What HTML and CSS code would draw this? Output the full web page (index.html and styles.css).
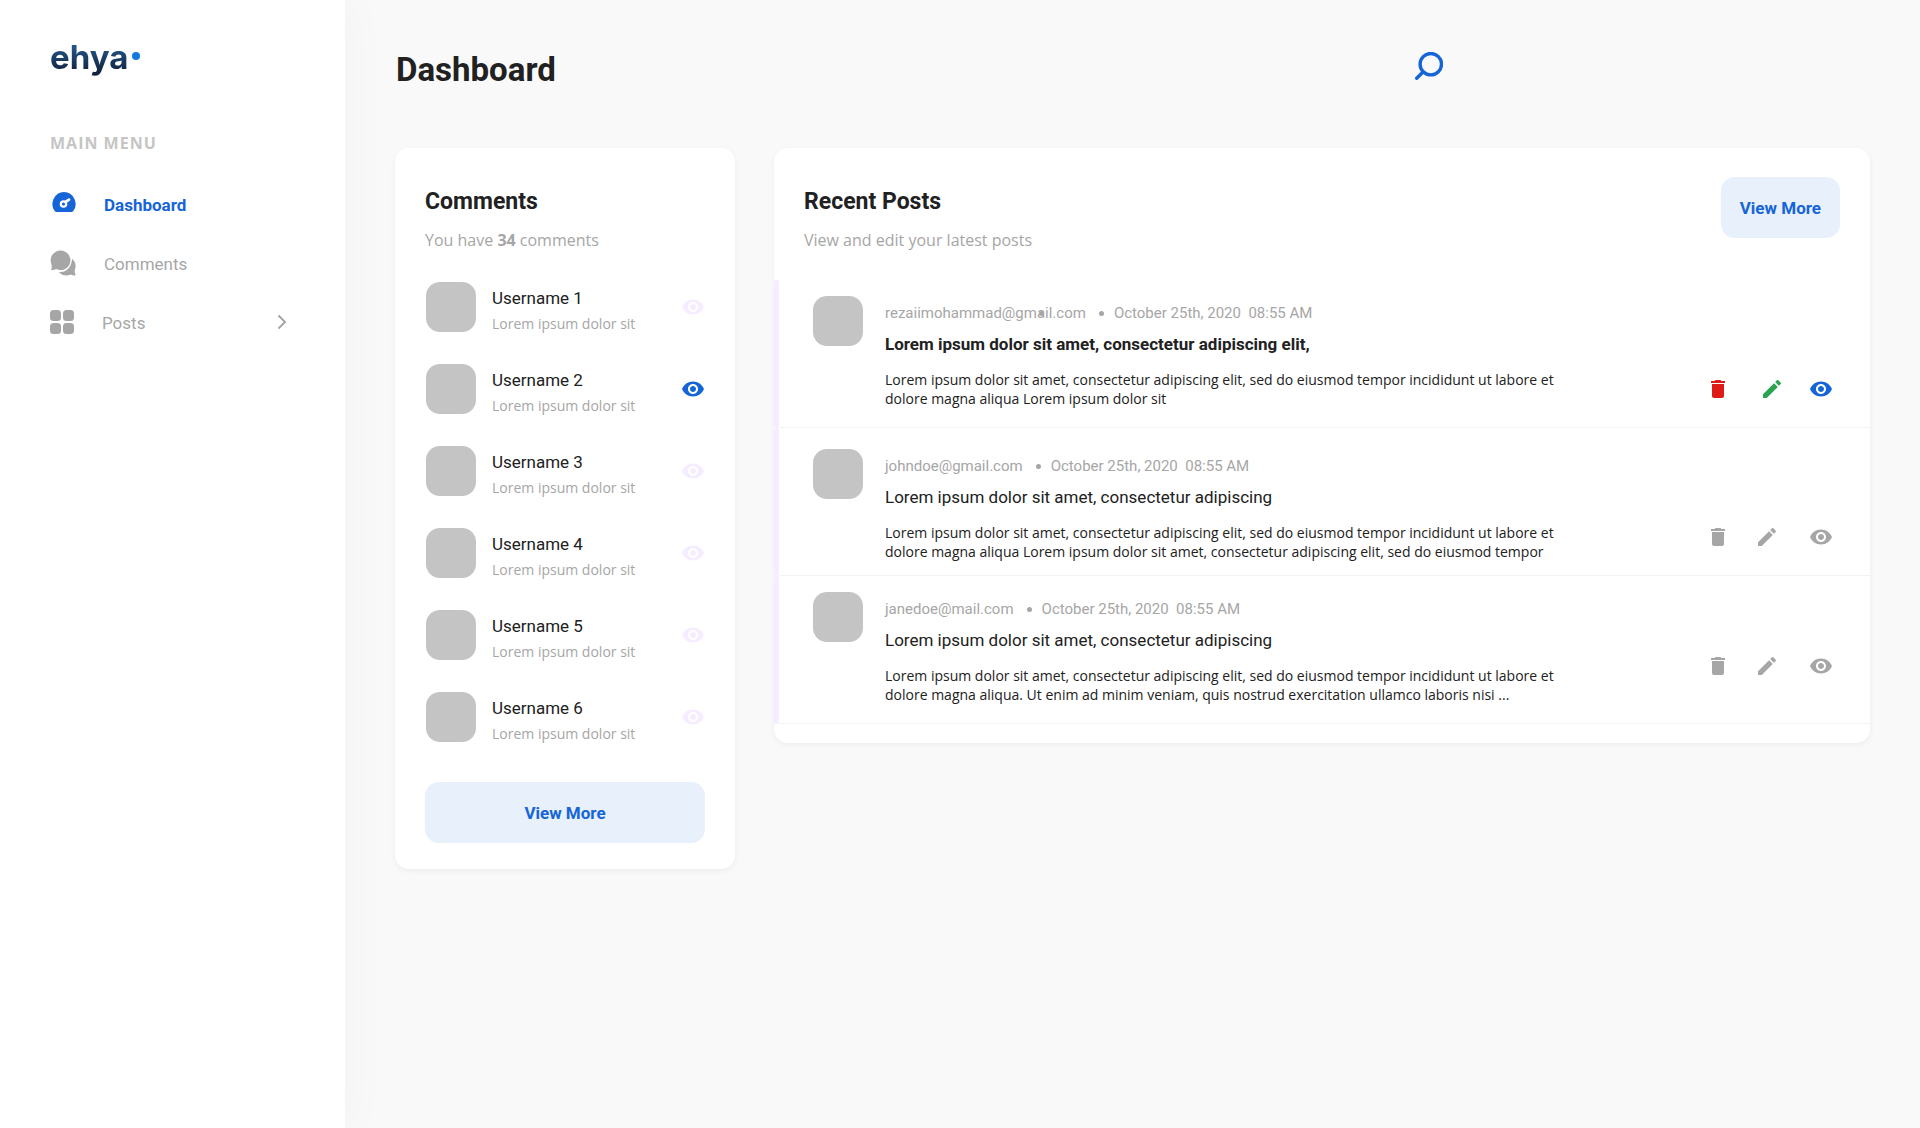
FILE: index.html
```html
<!DOCTYPE html>
<html lang="en">
<head>
<meta charset="utf-8">
<meta name="viewport" content="width=device-width, initial-scale=1">
<title>Dashboard</title>
<link rel="stylesheet" href="styles.css">
</head>
<body>
<svg class="sprite" aria-hidden="true">
  <symbol id="eye" viewBox="0 0 24 24"><path d="M12 4.5C7 4.5 2.73 7.61 1 12c1.73 4.39 6 7.5 11 7.5s9.27-3.11 11-7.5c-1.73-4.39-6-7.5-11-7.5zM12 17c-2.76 0-5-2.24-5-5s2.24-5 5-5 5 2.24 5 5-2.24 5-5 5zm0-8c-1.66 0-3 1.34-3 3s1.34 3 3 3 3-1.340 3-3-1.340-3-3-3z"/></symbol>
  <symbol id="pencil" viewBox="0 0 24 24"><path d="M3 17.25V21h3.75L17.810 9.940l-3.750-3.750L3 17.250zM20.710 7.040c.390-.390.390-1.020 0-1.410l-2.340-2.340c-.390-.390-1.020-.390-1.410 0l-1.830 1.830 3.750 3.750 1.830-1.830z"/></symbol>
  <symbol id="trash" viewBox="0 0 24 24"><path d="M6 19c0 1.100.900 2 2 2h8c1.100 0 2-.900 2-2V7H6v12zM19 4h-3.500l-1-1h-5l-1 1H5v2h14V4z"/></symbol>
</svg>
<div class="app">
  <aside class="sidebar">
    <a class="logo" href="#"><span class="logo-text">ehya</span><span class="logo-dot"></span></a>
    <p class="menu-title">MAIN MENU</p>
    <nav class="menu">
      <a class="menu-item active" href="#">
        <svg width="26" height="26" viewBox="0 0 26 26"><path fill="currentColor" d="M14 1a12 12 0 0 1 9.300 19Q22.500 21 21.500 21H6.500Q5.500 21 4.700 20A12 12 0 0 1 14 1z"/><circle cx="13.500" cy="13" r="2.700" fill="none" stroke="#fff" stroke-width="2.200"/><path d="M15.500 11L19 8.700" stroke="#fff" stroke-width="2.800" stroke-linecap="round"/></svg>
        <span>Dashboard</span>
      </a>
      <a class="menu-item" href="#">
        <svg width="26" height="26" viewBox="0 0 27 26" fill="currentColor"><path d="M11 0a10.200 10.200 0 1 1-4.600 19.300Q4 20.700 1 20.200Q2.300 17.800 1.600 14.600A10.200 10.200 0 0 1 11 0z"/><path d="M23 8.500Q28.500 13.500 25.600 20.400Q25.500 23.300 26.800 25.800Q24 26.300 21.500 25Q14.500 27.800 9 22.500Q21.500 22.500 23 8.500z"/></svg>
        <span>Comments</span>
      </a>
      <a class="menu-item" href="#">
        <svg width="24" height="24" viewBox="0 0 24 24" fill="currentColor"><rect width="11" height="11" rx="3.500"/><rect x="13" width="11" height="11" rx="3.500"/><rect y="13" width="11" height="11" rx="3.500"/><rect x="13" y="13" width="11" height="11" rx="3.500"/></svg>
        <span>Posts</span>
        <svg class="chevron" width="10" height="16" viewBox="0 0 10 16"><path d="M1.500 1.500L8 8L1.500 14.500" fill="none" stroke="currentColor" stroke-width="2"/></svg>
      </a>
    </nav>
  </aside>

  <main class="main">
    <header class="topbar">
      <h1>Dashboard</h1>
      <button class="search" type="button" aria-label="Search"><svg width="28" height="28" viewBox="0 0 28 28" fill="none" stroke="currentColor" stroke-width="3.400" stroke-linecap="round"><circle cx="15.800" cy="12.200" r="10.700"/><path d="M8 20L1.700 26.300"/></svg></button>
    </header>

    <div class="columns">
      <section class="card comments">
        <h2>Comments</h2>
        <p class="subtitle">You have <strong>34</strong> comments</p>
        <ul class="comment-list">
          <li class="comment"><span class="avatar"></span><div class="comment-text"><h3>Username 1</h3><p>Lorem ipsum dolor sit</p></div><button class="icon pale" type="button" aria-label="View"><svg><use href="#eye"/></svg></button></li>
          <li class="comment"><span class="avatar"></span><div class="comment-text"><h3>Username 2</h3><p>Lorem ipsum dolor sit</p></div><button class="icon blue" type="button" aria-label="View"><svg><use href="#eye"/></svg></button></li>
          <li class="comment"><span class="avatar"></span><div class="comment-text"><h3>Username 3</h3><p>Lorem ipsum dolor sit</p></div><button class="icon pale" type="button" aria-label="View"><svg><use href="#eye"/></svg></button></li>
          <li class="comment"><span class="avatar"></span><div class="comment-text"><h3>Username 4</h3><p>Lorem ipsum dolor sit</p></div><button class="icon pale" type="button" aria-label="View"><svg><use href="#eye"/></svg></button></li>
          <li class="comment"><span class="avatar"></span><div class="comment-text"><h3>Username 5</h3><p>Lorem ipsum dolor sit</p></div><button class="icon pale" type="button" aria-label="View"><svg><use href="#eye"/></svg></button></li>
          <li class="comment"><span class="avatar"></span><div class="comment-text"><h3>Username 6</h3><p>Lorem ipsum dolor sit</p></div><button class="icon pale" type="button" aria-label="View"><svg><use href="#eye"/></svg></button></li>
        </ul>
        <button class="more" type="button">View More</button>
      </section>

      <section class="card posts">
        <div class="posts-head">
          <div class="posts-heading">
            <h2>Recent Posts</h2>
            <p class="subtitle">View and edit your latest posts</p>
          </div>
          <button class="more" type="button">View More</button>
        </div>
        <ul class="post-list">
          <li class="post unread">
            <span class="avatar"></span>
            <div class="post-text">
              <p class="meta"><span class="email">rezaiimohammad@gmail.com<i class="dot stray"></i></span><i class="dot"></i><span>October 25th, 2020&nbsp; 08:55 AM</span></p>
              <h3>Lorem ipsum dolor sit amet, consectetur adipiscing elit,</h3>
              <p class="excerpt">Lorem ipsum dolor sit amet, consectetur adipiscing elit, sed do eiusmod tempor incididunt ut labore et dolore magna aliqua Lorem ipsum dolor sit</p>
            </div>
            <div class="actions">
              <button class="icon red" type="button" aria-label="Delete"><svg><use href="#trash"/></svg></button>
              <button class="icon green edit" type="button" aria-label="Edit"><svg><use href="#pencil"/></svg></button>
              <button class="icon blue" type="button" aria-label="View"><svg><use href="#eye"/></svg></button>
            </div>
          </li>
          <li class="post roomy">
            <span class="avatar"></span>
            <div class="post-text">
              <p class="meta"><span class="email">johndoe@gmail.com</span><i class="dot"></i><span>October 25th, 2020&nbsp; 08:55 AM</span></p>
              <h3>Lorem ipsum dolor sit amet, consectetur adipiscing</h3>
              <p class="excerpt">Lorem ipsum dolor sit amet, consectetur adipiscing elit, sed do eiusmod tempor incididunt ut labore et dolore magna aliqua Lorem ipsum dolor sit amet, consectetur adipiscing elit, sed do eiusmod tempor</p>
            </div>
            <div class="actions">
              <button class="icon" type="button" aria-label="Delete"><svg><use href="#trash"/></svg></button>
              <button class="icon edit" type="button" aria-label="Edit"><svg><use href="#pencil"/></svg></button>
              <button class="icon" type="button" aria-label="View"><svg><use href="#eye"/></svg></button>
            </div>
          </li>
          <li class="post raised">
            <span class="avatar"></span>
            <div class="post-text">
              <p class="meta"><span class="email">janedoe@mail.com</span><i class="dot"></i><span>October 25th, 2020&nbsp; 08:55 AM</span></p>
              <h3>Lorem ipsum dolor sit amet, consectetur adipiscing</h3>
              <p class="excerpt">Lorem ipsum dolor sit amet, consectetur adipiscing elit, sed do eiusmod tempor incididunt ut labore et dolore magna aliqua. Ut enim ad minim veniam, quis nostrud exercitation ullamco laboris nisi ...</p>
            </div>
            <div class="actions">
              <button class="icon" type="button" aria-label="Delete"><svg><use href="#trash"/></svg></button>
              <button class="icon edit" type="button" aria-label="Edit"><svg><use href="#pencil"/></svg></button>
              <button class="icon" type="button" aria-label="View"><svg><use href="#eye"/></svg></button>
            </div>
          </li>
        </ul>
      </section>
    </div>
  </main>
</div>
</body>
</html>
```
FILE: styles.css
```css
:root {
  --blue: #1565d8;
  --grey: #a6a6a6;
  --ink: #212121;
  --lilac: #f5edff;
  --head: Roboto, "Noto Sans", sans-serif;
  --body: "Open Sans", "Noto Sans", sans-serif;
}

* { box-sizing: border-box; }

body {
  margin: 0;
  background: #f9f9f9;
  color: var(--ink);
  font-family: var(--body);
}

h1, h2, h3, p, ul { margin: 0; padding: 0; }
h1, h2, h3 { font-family: var(--head); }
ul { list-style: none; }
a { color: inherit; text-decoration: none; }
button {
  border: 0;
  padding: 0;
  background: none;
  color: inherit;
  cursor: pointer;
}
button svg { display: block; }
.sprite { display: none; }

.app {
  display: flex;
  min-height: 100vh;
}

/* Sidebar */
.sidebar {
  flex: 0 0 345px;
  padding: 35px 58px 0 50px;
  background: #fff;
  box-shadow: 0 0 48px rgba(0, 0, 0, 0.035);
}
.logo {
  display: flex;
  align-items: center;
  gap: 4px;
  height: 44px;
}
.logo-text {
  background: linear-gradient(#235a8f 20%, #12233f 85%);
  background-clip: text;
  -webkit-background-clip: text;
  color: transparent;
  font-family: Inter, "Open Sans", sans-serif;
  font-size: 33px;
  font-weight: 700;
  line-height: 44px;
}
.logo-dot {
  width: 8px;
  height: 8px;
  margin-bottom: 2px;
  border-radius: 50%;
  background: #1578dc;
}
.menu-title {
  margin-top: 53px;
  color: #c5c5c5;
  font-size: 16px;
  font-weight: 700;
  line-height: 22px;
  letter-spacing: 1px;
}
.menu {
  display: flex;
  flex-direction: column;
  gap: 33px;
  margin-top: 37px;
}
.menu-item {
  display: flex;
  align-items: center;
  gap: 28px;
  height: 26px;
  color: var(--grey);
  font-family: var(--head);
  font-size: 17px;
  line-height: 26px;
}
.menu-item span { padding-top: 2px; }
.menu-item.active {
  color: var(--blue);
  font-weight: 700;
}
.chevron { margin-left: auto; }

/* Main area */
.main {
  flex: 1;
  min-width: 0;
  padding: 50px;
}
.topbar {
  display: flex;
  align-items: flex-start;
  justify-content: space-between;
  margin-bottom: 58px;
  padding-left: 1px;
}
h1 {
  font-size: 33px;
  line-height: 40px;
}
.search {
  margin: 2px 29% 0 0;
  color: var(--blue);
}
.columns {
  display: grid;
  grid-template-columns: 340px minmax(0, 1fr);
  align-items: start;
  gap: 39px;
}
.card {
  border-radius: 14px;
  background: #fff;
  box-shadow: 0 2px 6px rgba(0, 0, 0, 0.05);
}
h2 {
  font-size: 23px;
  line-height: 28px;
}
.subtitle {
  margin-top: 13px;
  color: var(--grey);
  font-size: 16px;
  line-height: 22px;
}
.more {
  height: 61px;
  border-radius: 14px;
  background: #e8f0fb;
  color: var(--blue);
  font: 700 17px/24px var(--head);
}
.avatar {
  flex: none;
  width: 50px;
  height: 50px;
  border-radius: 14px;
  background: #c4c4c4;
}
.icon { color: var(--grey); }
.icon svg {
  width: 24px;
  height: 24px;
  fill: currentColor;
}
.pale { color: var(--lilac); }
.blue { color: var(--blue); }
.red { color: #dd1c1a; }
.green { color: #2aa44f; }

/* Comments */
.comments { padding: 40px 30px 26px; }
.comments .more { width: 100%; }
.comment-list {
  display: flex;
  flex-direction: column;
  gap: 32px;
  margin: 31px 0 40px;
}
.comment {
  display: flex;
  align-items: center;
  gap: 16px;
  height: 50px;
  padding-left: 1px;
}
.comment-text {
  flex: 1;
  padding-top: 6px;
}
.comment h3 {
  font-size: 17px;
  font-weight: 400;
  line-height: 24px;
}
.comment p {
  margin-top: 4px;
  color: var(--grey);
  font-size: 14px;
  line-height: 20px;
}

/* Posts */
.posts { padding-bottom: 19px; }
.posts-head {
  display: flex;
  align-items: flex-start;
  justify-content: space-between;
  padding: 29px 30px 29px;
}
.posts-heading { padding-top: 11px; }
.posts-head .more { padding: 0 19px; }
.post {
  position: relative;
  display: flex;
  min-height: 148px;
  padding: 16px 37px 18px 39px;
  background: linear-gradient(#f3f3f3, #f3f3f3) 5px 100% / 100% 1px no-repeat;
}
.post::before {
  content: "";
  position: absolute;
  inset: 0 auto 0 0;
  width: 5px;
  border-radius: 2px;
  background: var(--lilac);
}
.post.roomy { padding-top: 21px; padding-bottom: 13px; }
.post-text {
  flex: 1;
  max-width: 702px;
  padding: 6px 0 0 22px;
}
.meta {
  display: flex;
  align-items: center;
  color: var(--grey);
  font-family: var(--head);
  font-size: 15px;
  line-height: 22px;
}
.email { position: relative; }
.dot {
  width: 5px;
  height: 5px;
  margin: 0 10px 0 13px;
  border-radius: 50%;
  background: var(--grey);
}
.dot.stray {
  position: absolute;
  top: 9px;
  right: 42px;
  margin: 0;
}
.post h3 {
  margin-top: 8px;
  font-size: 17px;
  font-weight: 400;
  line-height: 24px;
}
.post.unread h3 { font-weight: 700; }
.excerpt {
  margin-top: 14px;
  font-size: 14px;
  line-height: 19px;
}
.actions {
  display: flex;
  align-self: flex-end;
  margin-left: auto;
  margin-bottom: 9px;
}
.roomy .actions { margin-bottom: 14px; }
.raised .actions { margin-bottom: 28px; }
.edit { margin: 0 30px 0 25px; }
.unread .edit { margin: 0 25px 0 30px; }
```
